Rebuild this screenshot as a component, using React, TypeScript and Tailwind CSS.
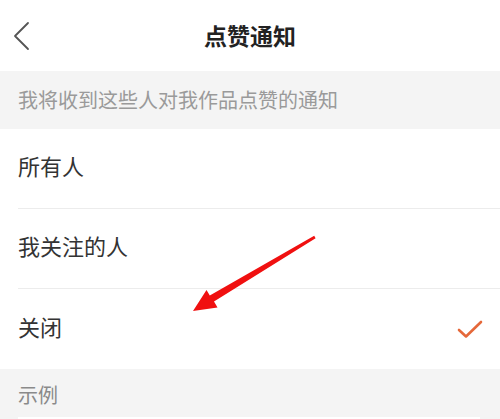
import { ReactNode } from "react";

const font = { fontFamily: '"Noto Sans CJK SC", "Noto Sans", sans-serif' };

function Row({ label, checked, last }: { label: string; checked?: boolean; last?: boolean }) {
  return (
    <div className="pl-[18px]">
      <div
        className={
          "h-[80px] flex items-center justify-between pr-[17px] " +
          (last ? "" : "border-b border-[#ececec]")
        }
      >
        <span className="text-[22px] text-[#333333] leading-none mb-[7px]">{label}</span>
        {checked && (
          <svg width="26" height="20" viewBox="0 0 26 20" fill="none">
            <path
              d="M2 11 L9 17.5 L24 3"
              stroke="#e5683a"
              strokeWidth="2.6"
              strokeLinecap="round"
              strokeLinejoin="round"
            />
          </svg>
        )}
      </div>
    </div>
  );
}

function Section({ children, h }: { children: ReactNode; h: string }) {
  return (
    <div className={"bg-[#f4f4f4] pl-[18px] flex items-center " + h}>
      <span className="text-[20px] text-[#9a9a9a] leading-none">{children}</span>
    </div>
  );
}

export default function App() {
  return (
    <div className="relative w-[500px] h-[419px] overflow-hidden bg-white" style={font}>
      <header className="h-[71px] flex items-center relative">
        <svg className="absolute left-[10px] top-[19px]" width="26" height="34" viewBox="0 0 26 34" fill="none">
          <path d="M18 4 L5 17 L18 30" stroke="#555555" strokeWidth="1.8" strokeLinecap="round" strokeLinejoin="round" />
        </svg>
        <h1 className="w-full text-center text-[23px] font-bold text-[#222222] leading-none">点赞通知</h1>
      </header>

      <Section h="h-[58px]">我将收到这些人对我作品点赞的通知</Section>

      <Row label="所有人" />
      <Row label="我关注的人" />
      <Row label="关闭" checked last />

      <div className="bg-[#f4f4f4] h-[48px] pl-[18px] flex items-center">
        <span className="text-[20px] text-[#8a8a8a] leading-none mt-[3px]">示例</span>
      </div>
      <div className="bg-[#f4f4f4] px-[18px]">
        <div className="bg-white h-[4px] w-[462px]" />
      </div>

      {/* red annotation arrow */}
      <svg className="absolute left-0 top-0 pointer-events-none" width="500" height="419">
        <polygon
          points="315.6,238.2 214,301.5 217.5,307.5 193,311 206.5,290 209.8,295.6 314.2,235.8"
          fill="#f01010"
        />
      </svg>
    </div>
  );
}
